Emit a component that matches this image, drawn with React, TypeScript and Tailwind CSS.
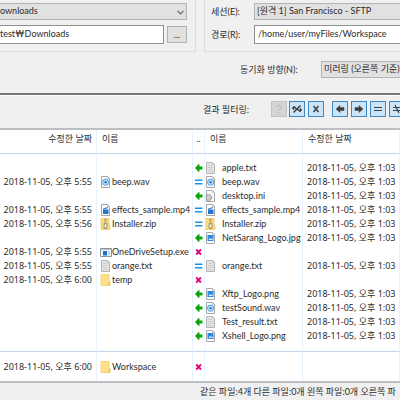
import React from "react";

type Kind = "txt" | "wav" | "ini" | "mp4" | "zip" | "img" | "exe" | "dir";
type State = "left" | "same" | "none";

interface Entry {
  left?: string;
  leftDate?: string;
  right?: string;
  rightDate?: string;
  kind: Kind;
  state: State;
}

const RIGHT_DATE = "2018-11-05, 오후 1:03";

const ENTRIES: Entry[] = [
  { kind: "txt", state: "left", right: "apple.txt", rightDate: RIGHT_DATE },
  { kind: "wav", state: "same", left: "beep.wav", leftDate: "2018-11-05, 오후 5:55", right: "beep.wav", rightDate: RIGHT_DATE },
  { kind: "ini", state: "left", right: "desktop.ini", rightDate: RIGHT_DATE },
  { kind: "mp4", state: "same", left: "effects_sample.mp4", leftDate: "2018-11-05, 오후 5:55", right: "effects_sample.mp4", rightDate: RIGHT_DATE },
  { kind: "zip", state: "same", left: "Installer.zip", leftDate: "2018-11-05, 오후 5:56", right: "Installer.zip", rightDate: RIGHT_DATE },
  { kind: "img", state: "left", right: "NetSarang_Logo.jpg", rightDate: RIGHT_DATE },
  { kind: "exe", state: "none", left: "OneDriveSetup.exe", leftDate: "2018-11-05, 오후 5:55" },
  { kind: "txt", state: "same", left: "orange.txt", leftDate: "2018-11-05, 오후 5:55", right: "orange.txt", rightDate: RIGHT_DATE },
  { kind: "dir", state: "none", left: "temp", leftDate: "2018-11-05, 오후 6:00" },
  { kind: "img", state: "left", right: "Xftp_Logo.png", rightDate: RIGHT_DATE },
  { kind: "wav", state: "left", right: "testSound.wav", rightDate: RIGHT_DATE },
  { kind: "txt", state: "left", right: "Test_result.txt", rightDate: RIGHT_DATE },
  { kind: "img", state: "left", right: "Xshell_Logo.png", rightDate: RIGHT_DATE },
];

const WORKSPACE: Entry = { kind: "dir", state: "none", left: "Workspace", leftDate: "2018-11-05, 오후 6:00" };

function FileIcon({ kind }: { kind: Kind }) {
  if (kind === "dir") {
    return (
      <svg width="12" height="12" viewBox="0 0 12 12" className="shrink-0" aria-hidden="true">
        <path d="M1 0.500H9V7.500H10V11.500H1z" fill="#ffe08a" stroke="#f0cd66" strokeWidth="0.8" />
        <path d="M8.500 11.500V8H10V11.500z" fill="#ebc14e" />
      </svg>
    );
  }
  if (kind === "zip") {
    return (
      <svg width="12" height="12" viewBox="0 0 12 12" className="shrink-0" aria-hidden="true">
        <path d="M1 0.500H9V7.500H10V11.500H1z" fill="#fbdc7e" stroke="#e9c255" strokeWidth="0.7" />
        <path d="M4.500 1h2v1.500H4.500zM4.500 3.500h2v1H4.500z" fill="#8d8877" />
        <path d="M4 5.500h3v5H4z" fill="#cfc8ae" stroke="#8f8972" strokeWidth="0.7" />
        <path d="M5 7h1v2H5z" fill="#fff" />
      </svg>
    );
  }
  if (kind === "exe") {
    return (
      <svg width="12" height="12" viewBox="0 0 12 12" className="shrink-0" aria-hidden="true">
        <path d="M0.500 2.500H11.500V10.500H0.500z" fill="#f4f6f8" stroke="#8c949c" />
        <path d="M1 3H11V4H1z" fill="#b8c0c8" />
        <path d="M3 5H7V9.500H3z" fill="#1673d1" />
        <path d="M8 5H10V9.500H8z" fill="#c9d6e2" />
      </svg>
    );
  }
  return (
    <svg width="12" height="12" viewBox="0 0 12 12" className="shrink-0" aria-hidden="true">
      <path
        d="M1.500 0.500H7.500L9.500 2.500V11.500H1.500z"
        fill={kind === "txt" ? "#e4e4e4" : "#fcfcfc"}
        stroke={kind === "txt" ? "#b4b4b4" : "#a6a6a6"}
      />
      <path d="M7.500 0.500V2.500H9.500" fill="none" stroke="#bdbdbd" strokeWidth="0.8" />
      {kind === "txt" && <path d="M3 3.500H7M3 5.500H8M3 7.500H8M3 9.500H8" stroke="#c9c9c9" strokeWidth="0.8" />}
      {kind === "wav" && (
        <>
          <circle cx="5.600" cy="6.300" r="2.900" fill="#e3f1fc" stroke="#5aa6e6" strokeWidth="1.100" />
          <circle cx="5.600" cy="6.300" r="1.200" fill="#1b74c9" />
        </>
      )}
      {kind === "ini" && (
        <>
          <circle cx="3.800" cy="7.500" r="2.800" fill="#dcdcdc" stroke="#9a9a9a" strokeWidth="1.300" strokeDasharray="1.600 0.600" />
          <circle cx="3.800" cy="7.500" r="1" fill="#fff" stroke="#999" strokeWidth="0.600" />
        </>
      )}
      {kind === "mp4" && (
        <>
          <path d="M3 5.500H8.500V10H3z" fill="#1c76d2" />
          <path d="M3 5.200L7.800 3.600" stroke="#1c76d2" strokeWidth="1.100" />
        </>
      )}
      {kind === "img" && (
        <>
          <path d="M2.500 3H8.500V9H2.500z" fill="#2d8ae0" />
          <path d="M3.500 8L5 6L6.200 7L7 6.200L8 8z" fill="#d8ecfc" />
        </>
      )}
    </svg>
  );
}

function StateIcon({ state }: { state: State }) {
  return (
    <svg width="8" height="10" viewBox="0 0 8 10" className="ml-[2px] block shrink-0" role="img" aria-label={state}>
      {state === "left" && <path d="M0 5L3.500 1.200H4.500V3.600H7.500V6.400H4.500V8.800H3.500z" fill="#0ca60c" />}
      {state === "same" && <path d="M0 2.500H7.500V4H0zM0 6H7.500V7.500H0z" fill="#1a94e6" />}
      {state === "none" && <path d="M1.200 2.500L6 7.500M6 2.500L1.200 7.500" stroke="#dd0a78" strokeWidth="1.900" />}
    </svg>
  );
}

function Row({ entry, cell }: { entry: Entry; cell: string }) {
  const base = `border-r border-[#e6f2fd] p-0 leading-[14px] ${cell}`;
  return (
    <tr>
      <td className={`${base} pr-1 text-right font-['Noto_Sans','Noto_Sans_CJK_KR',sans-serif]`}>{entry.leftDate}</td>
      <td className={base}>
        {entry.left && (
          <span className="flex h-[14px] items-center pl-[3px]">
            <FileIcon kind={entry.kind} />
            <span>{entry.left}</span>
          </span>
        )}
      </td>
      <td className={base}>
        <span className="flex h-[14px] items-center">
          <StateIcon state={entry.state} />
        </span>
      </td>
      <td className={base}>
        {entry.right && (
          <span className="flex h-[14px] items-center gap-[5px]">
            <FileIcon kind={entry.kind} />
            <span>{entry.right}</span>
          </span>
        )}
      </td>
      <td className={`${base} pl-1 font-['Noto_Sans','Noto_Sans_CJK_KR',sans-serif]`}>{entry.rightDate}</td>
    </tr>
  );
}

function FilterButton({ label, disabled, children }: { label: string; disabled?: boolean; children: React.ReactNode }) {
  return (
    <button
      type="button"
      aria-label={label}
      disabled={disabled}
      className="flex size-4 shrink-0 items-center justify-center border border-[#3f87c1] bg-[#cce4f7] text-[#404040] disabled:border-[#c4c4c4] disabled:bg-[#d4d4d4] disabled:text-[#c2c2c2]"
    >
      <svg width="10" height="10" viewBox="0 0 10 10" className="shrink-0" fill="none" stroke="currentColor" strokeWidth="1.500" aria-hidden="true">
        {children}
      </svg>
    </button>
  );
}

function Chevron() {
  return (
    <svg width="7" height="5" viewBox="0 0 7 5" className="pointer-events-none absolute top-[7px] right-[3px]" fill="none" stroke="#666" strokeWidth="1.200" aria-hidden="true">
      <path d="M0.500 0.800L3.500 3.800L6.500 0.800" />
    </svg>
  );
}

export default function App() {
  const select = "block h-[17px] w-full appearance-none border border-[#b4b4b4] bg-[#e1e1e1] pb-px outline-none";
  const input = "h-[19px] min-w-0 flex-1 border border-[#8f8f8f] bg-white pb-[3px] outline-none";
  const head = "h-6 border-r border-b border-[#e6f2fd] border-b-[#c6d3ee] p-0 align-top font-normal";
  return (
    <main
      lang="ko"
      className="w-full overflow-hidden bg-[#f0f0f0] font-['Lato','Noto_Sans_CJK_KR',sans-serif] text-[9px] whitespace-nowrap text-[#2b2b2b]"
    >
      <section className="flex gap-2">
        <div className="w-[196px] shrink-0 space-y-[5px] border-r border-b border-[#dcdcdc] pt-[3px] pr-2 pb-[7px]">
          <div className="relative">
            <select aria-label="로컬 세션" className={`${select} border-l-0`}>
              <option>ownloads</option>
            </select>
            <Chevron />
          </div>
          <div className="flex items-center gap-[3px]">
            <input aria-label="로컬 경로" defaultValue="test₩Downloads" className={`${input} border-l-0`} />
            <button type="button" className="h-[17px] w-5 border border-[#b0b0b0] bg-[#e1e1e1] leading-[14px]">
              ...
            </button>
          </div>
        </div>
        <div className="flex-1 space-y-[5px] border-b border-l border-[#dcdcdc] pt-[3px] pb-[7px] pl-[6px]">
          <div className="flex items-center">
            <label htmlFor="session" className="w-[43px] shrink-0">세션(E):</label>
            <select id="session" className={`${select} border-r-0 pl-[2px]`}>
              <option>[원격 1] San Francisco - SFTP</option>
            </select>
          </div>
          <div className="flex items-center">
            <label htmlFor="path" className="w-[43px] shrink-0">경로(R):</label>
            <input id="path" defaultValue="/home/user/myFiles/Workspace" className={`${input} border-r-0 pl-[3px]`} />
          </div>
        </div>
      </section>

      <section className="flex items-center border-b-2 border-[#777] pt-[9px] pb-[15px] pl-[240px]">
        <label htmlFor="direction" className="w-[81px] shrink-0">동기화 방향(N):</label>
        <select id="direction" className={`${select} border-r-0 pl-[2px]`}>
          <option>미러링 (오른쪽 기준)</option>
        </select>
      </section>

      <section className="flex h-[35px] items-start border-t border-b-2 border-t-white border-b-[#bcbec2] pt-[5px] pl-[203px]">
        <span className="w-[68px] shrink-0 pt-[2px]">결과 필터링:</span>
        <div className="flex gap-2">
          <div className="flex gap-[2px]">
            <FilterButton label="알 수 없음" disabled>
              <path d="M3 3.500Q3 1.500 5 1.500T7 3.500Q7 4.500 5 5.500V6.500M5 8V9.500" />
            </FilterButton>
            <FilterButton label="다른 파일">
              <path d="M1.500 8.500L8.500 1.500M2 2.500L5 5.500M5 4.500L8 7.500" />
              <path d="M0 4L2 2.200V5.800zM10 6L8 4.200V7.800z" fill="currentColor" strokeWidth="0.500" />
            </FilterButton>
            <span className="pl-px">
              <FilterButton label="없음">
                <path d="M2.500 2L7.500 8M7.500 2L2.500 8" />
              </FilterButton>
            </span>
          </div>
          <div className="flex gap-[3px]">
            <FilterButton label="왼쪽으로">
              <path d="M1 5L5 1.500V3.500H9V6.500H5V8.500z" fill="currentColor" strokeWidth="0.500" />
            </FilterButton>
            <FilterButton label="오른쪽으로">
              <path d="M9 5L5 1.500V3.500H1V6.500H5V8.500z" fill="currentColor" strokeWidth="0.500" />
            </FilterButton>
            <FilterButton label="같음">
              <path d="M1 3.500H9M1 6.500H9" strokeWidth="1.200" />
            </FilterButton>
            <FilterButton label="같지 않음">
              <path d="M1 3.500H9M1 6.500H9M3 1L7 9" strokeWidth="1.200" />
            </FilterButton>
          </div>
        </div>
      </section>

      <table className="w-full table-fixed border-separate border-spacing-0 border-b-2 border-[#bcbec2] bg-white">
        <colgroup>
          <col className="w-[97px]" />
          <col className="w-24" />
          <col className="w-3" />
          <col className="w-[98px]" />
          <col />
        </colgroup>
        <thead className="text-left leading-[17px]">
          <tr>
            <th className={`${head} pr-1 text-right`}>수정한 날짜</th>
            <th className={`${head} pl-[5px]`}>이름</th>
            <th className={`${head} text-center`}>..</th>
            <th className={`${head} pl-[5px]`}>이름</th>
            <th className={`${head} pl-[5px]`}>수정한 날짜</th>
          </tr>
        </thead>
        <tbody>
          {ENTRIES.map((entry, i) => (
            <Row
              key={i}
              entry={entry}
              cell={
                i === 0
                  ? "h-[21px] align-bottom"
                  : i === ENTRIES.length - 1
                    ? "h-[23px] align-top border-b border-b-[#c6d3ee]"
                    : "h-[14px]"
              }
            />
          ))}
        </tbody>
        <tbody>
          <Row entry={WORKSPACE} cell="h-[29px]" />
        </tbody>
      </table>

      <footer className="h-[17px] pl-[200px] leading-[17px]">
        같은 파일:4개 다른 파일:0개 왼쪽 파일:0개 오른쪽 파
      </footer>
    </main>
  );
}
